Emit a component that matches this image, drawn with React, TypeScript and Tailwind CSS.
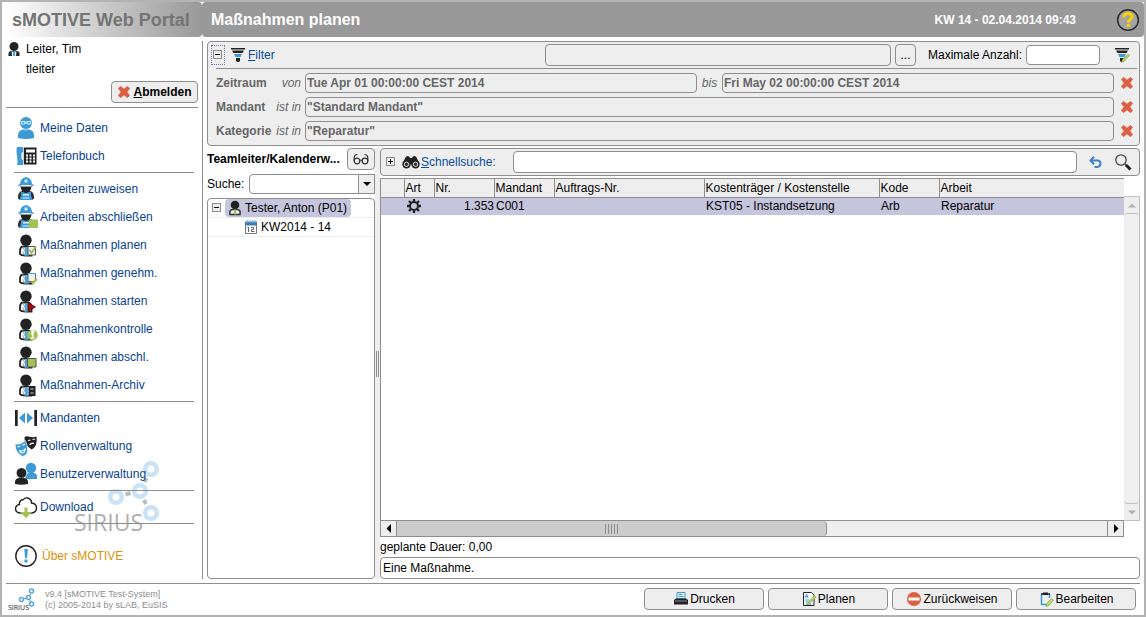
import type { ReactNode } from 'react';

type IconName =
  | 'user' | 'phone' | 'worker' | 'workerDone' | 'plan' | 'approve' | 'start'
  | 'control' | 'close' | 'archive' | 'clients' | 'roles' | 'users' | 'download' | 'about';

type NavItem = { label: string; icon: IconName };

const navGroups: NavItem[][] = [
  [
    { label: 'Meine Daten', icon: 'user' },
    { label: 'Telefonbuch', icon: 'phone' },
  ],
  [
    { label: 'Arbeiten zuweisen', icon: 'worker' },
    { label: 'Arbeiten abschließen', icon: 'workerDone' },
    { label: 'Maßnahmen planen', icon: 'plan' },
    { label: 'Maßnahmen genehm.', icon: 'approve' },
    { label: 'Maßnahmen starten', icon: 'start' },
    { label: 'Maßnahmenkontrolle', icon: 'control' },
    { label: 'Maßnahmen abschl.', icon: 'close' },
    { label: 'Maßnahmen-Archiv', icon: 'archive' },
  ],
  [
    { label: 'Mandanten', icon: 'clients' },
    { label: 'Rollenverwaltung', icon: 'roles' },
    { label: 'Benutzerverwaltung', icon: 'users' },
  ],
  [{ label: 'Download', icon: 'download' }],
];

export default function App() {
  return (
    <div className="flex h-screen flex-col border-2 border-[#b3b3b3] bg-white pl-1 font-['Liberation_Sans',Arial,sans-serif] text-xs text-black">
      <Header />
      <div className="flex min-h-0 flex-1 py-1">
        <Sidebar />
        <main className="flex min-w-0 flex-1 flex-col gap-0.5 px-1">
          <FilterPanel />
          <div className="flex min-h-0 flex-1">
            <TeamPane />
            <div className="flex w-[5px] shrink-0 items-center justify-center bg-[#eee]">
              <div className="h-[26px] w-[3px] border-x border-[#8e8e8e]" />
            </div>
            <ResultPane />
          </div>
        </main>
      </div>
      <Footer />
    </div>
  );
}

function Header() {
  return (
    <header className="flex h-[35px] shrink-0">
      <div className="flex w-[196px] items-center rounded-r-sm bg-linear-to-r from-white to-[#999] pl-1.5 text-lg font-bold whitespace-nowrap text-[#747474]">
        sMOTIVE Web Portal
      </div>
      <div className="flex flex-1 items-center rounded-sm bg-[#999] pl-[9px] font-bold text-white">
        <h1 className="flex-1 text-base">Maßnahmen planen</h1>
        <span className="mr-10">KW 14 - 02.04.2014 09:43</span>
        <button aria-label="Hilfe" className="mr-1">
          <svg viewBox="0 0 24 24" className="size-6">
            <circle cx="12" cy="12" r="10.300" fill="#a3a3a3" stroke="#2b2b2b" strokeWidth="1.500" />
            <path d="M7.800 9.500C7.800 4.300 16 4.300 16 8.800c0 2.800-3.700 2.700-3.700 5.700" fill="none" stroke="#f8d200" strokeWidth="3" />
            <rect x="10.800" y="16" width="3" height="3" fill="#f8d200" />
          </svg>
        </button>
      </div>
    </header>
  );
}

function Sidebar() {
  return (
    <aside className="relative flex w-[197px] shrink-0 flex-col border-r border-[#8e8e8e]">
      <Watermark />
      <div className="relative flex gap-1.5 pl-0.5 leading-4">
        <svg viewBox="0 0 12 16" className="h-4 w-3">
          <circle cx="6" cy="5.500" r="4.500" fill="#222" />
          <path d="M0.500 15v-2.500q0-2.500 3-2.500h5q3 0 3 2.500v2.500z" fill="#222" />
          <path d="M3.500 10.500h5l-.500 4.500h-4z" fill="#dff0fa" />
          <path d="M5 10.500h2v4.500h-2z" fill="#4aa8e0" />
        </svg>
        <div className="flex flex-col gap-1">
          <span>Leiter, Tim</span>
          <span>tleiter</span>
        </div>
      </div>
      <button className="relative mt-1 mr-1 flex h-[22px] w-[87px] items-center justify-center gap-0.5 self-end rounded-sm border border-[#8e8e8e] bg-[#eee] font-bold">
        <CrossIcon />
        <span><u>A</u>bmelden</span>
      </button>
      <hr className="mt-1 mr-1 border-[#8e8e8e]" />
      <nav className="relative mt-1.5 mr-2 ml-2">
        {navGroups.map((group) => (
          <div key={group[0].label} className="mb-0.5 border-b border-[#8e8e8e] pb-0.5">
            {group.map((item) => (
              <a key={item.label} href="#" className="flex h-7 items-center gap-0.5 whitespace-nowrap text-[#0a3f91]">
                <NavIcon name={item.icon} />
                {item.label}
              </a>
            ))}
          </div>
        ))}
        <a href="#" className="mt-[18px] flex h-7 items-center gap-1 text-[#dc9208]">
          <NavIcon name="about" />
          Über sMOTIVE
        </a>
      </nav>
    </aside>
  );
}

function Watermark() {
  return (
    <svg viewBox="0 0 90 84" className="absolute bottom-[35px] left-[66px] h-[84px] w-[90px]" aria-hidden="true">
      <g fill="none" stroke="#c9e2f5" strokeWidth="4.500">
        <circle cx="79" cy="9" r="5.800" />
        <circle cx="68" cy="31" r="5.800" />
        <circle cx="44" cy="37" r="5.800" />
        <circle cx="79" cy="53" r="5.800" />
      </g>
      <g stroke="#bdbdbd" strokeWidth="4">
        <path d="M72.500 22l2-4M53.500 34.500l5-1.500M72 40l2 4" />
      </g>
      <text x="2" y="71" fontSize="23" fill="#b0b0b0" fontFamily="Open Sans, sans-serif">SIRIUS</text>
    </svg>
  );
}

function Toggle({ open }: { open: boolean }) {
  return (
    <svg viewBox="0 0 10 10" className="size-2.5 shrink-0">
      <rect x="0.500" y="0.500" width="8" height="8" fill="#eee" stroke="#8e8e8e" />
      <path d={open ? 'M2 4.500h5' : 'M2 4.500h5M4.500 2v5'} stroke="#111" />
    </svg>
  );
}

function FilterPanel() {
  return (
    <section className="shrink-0 rounded-sm border border-[#8e8e8e] bg-[#eee]">
      <div className="flex h-[26px] items-center pl-[3px]">
        <div className="flex w-[334px] shrink-0 items-center">
          <button aria-label="Filter einklappen" className="flex h-5 w-3.5 items-center justify-center border border-dotted border-[#6f7f9f]">
            <Toggle open />
          </button>
          <FunnelIcon className="ml-[5px] size-4" />
          <a href="#" className="ml-0.5 text-[#0a4d9c]"><u>F</u>ilter</a>
        </div>
        <input aria-label="Filtername" readOnly className="h-[22px] min-w-0 flex-1 rounded-sm border border-[#8e8e8e] bg-[#eee]" />
        <button className="ml-1 h-[22px] w-[21px] rounded-sm border border-[#8e8e8e]">...</button>
        <label htmlFor="max" className="ml-3 w-[98px] whitespace-nowrap">Maximale Anzahl:</label>
        <input id="max" className="h-5 w-[74px] rounded-sm border border-[#8e8e8e] bg-white px-0.5" />
        <button aria-label="Filter bearbeiten" className="mr-[9px] ml-3.5">
          <FunnelIcon edit className="size-4" />
        </button>
      </div>
      <hr className="mr-0.5 ml-2 border-[#8e8e8e]" />
      <div className="flex flex-col gap-1 py-1 pr-[5px] pl-2">
        <FilterRow label="Zeitraum" op="von" value="Tue Apr 01 00:00:00 CEST 2014" until="Fri May 02 00:00:00 CEST 2014" />
        <FilterRow label="Mandant" op="ist in" value={'"Standard Mandant"'} />
        <FilterRow label="Kategorie" op="ist in" value={'"Reparatur"'} />
      </div>
    </section>
  );
}

function FilterRow({ label, op, value, until }: { label: string; op: string; value: string; until?: string }) {
  const box = 'h-5 min-w-0 flex-1 rounded-sm border border-[#8e8e8e] bg-[#eee] px-px font-bold text-[#666]';
  return (
    <div className="flex items-center text-[#666]">
      <label htmlFor={label} className="mr-1 flex w-[85px] justify-between whitespace-nowrap">
        <b>{label}</b>
        <i>{op}</i>
      </label>
      <input id={label} readOnly value={value} className={box} />
      {until && (
        <>
          <label htmlFor="until" className="w-[25px] text-center italic">bis</label>
          <input id="until" readOnly value={until} className={box} />
        </>
      )}
      <button aria-label={label + ' entfernen'} className="ml-1.5">
        <CrossIcon />
      </button>
    </div>
  );
}

function TeamPane() {
  return (
    <section className="flex w-[168px] shrink-0 flex-col">
      <div className="flex h-[22px] items-center justify-between">
        <b className="whitespace-nowrap">Teamleiter/Kalenderw...</b>
        <button aria-label="Ansicht" className="flex h-[22px] w-7 items-center justify-center rounded-sm border border-[#8e8e8e] bg-[#eee]">
          <svg viewBox="0 0 16 12" className="h-3 w-4" fill="none" stroke="#333" strokeWidth="1.200">
            <circle cx="4" cy="8" r="2.800" />
            <circle cx="12" cy="8" r="2.800" />
            <path d="M6.800 7.500q1.200-1 2.400 0M1.200 8V4.500Q1.500 1.500 4.500 1.500M14.800 8V4.500Q14.500 1.500 11.500 1.500" />
          </svg>
        </button>
      </div>
      <div className="mt-1 flex h-5 items-center">
        <label htmlFor="team" className="w-[42px]">Suche:</label>
        <input id="team" className="h-5 min-w-0 flex-1 rounded-l-sm border border-[#8e8e8e] px-0.5" />
        <button aria-label="Auswahl" className="flex h-5 w-4 items-center justify-center border border-l-0 border-[#8e8e8e] bg-[#eee]">
          <svg viewBox="0 0 8 4" className="h-1 w-2"><path d="M0 0h8L4 4z" /></svg>
        </button>
      </div>
      <ul className="mt-1 flex-1 rounded-sm border border-[#8e8e8e]">
        <li className="flex h-[19px] items-center border-b border-[#eee] pl-1">
          <Toggle open />
          <span className="ml-[3px] flex h-[18px] items-center gap-0.5 rounded-sm bg-[#c6c5de] pr-1 pl-0.5 whitespace-nowrap">
            <svg viewBox="0 0 16 18" className="h-[18px] w-4">
              <circle cx="8" cy="6" r="4.300" fill="#222" />
              <path d="M3 15.500q-1-5 3-5h4q4 0 3 5z" fill="#eee" stroke="#333" strokeWidth="1.500" />
              <path d="M7 10.500h2v5h-2z" fill="#a4c254" />
            </svg>
            Tester, Anton (P01)
          </span>
        </li>
        <li className="flex h-[19px] items-center gap-1 border-b border-[#eee] pl-[37px]">
          <svg viewBox="0 0 12 14" className="h-3.5 w-3">
            <path d="M0.500 2.500h11v11h-11z" fill="#fff" stroke="#777" />
            <path d="M0 1.500h12v4H0z" fill="#3a7fb8" />
            <path d="M2.500 0v3M5 0v3M7.500 0v3M10 0v3" stroke="#7ab0da" />
            <path d="M3.500 7v5M2.500 7.500h1M6 7.500h2.500v2H6.500v2H9.500" fill="none" stroke="#666" />
          </svg>
          KW2014 - 14
        </li>
      </ul>
    </section>
  );
}

const columns = [
  { label: '', width: 'w-[23px]' },
  { label: 'Art', width: 'w-[30px]' },
  { label: 'Nr.', width: 'w-[60px]' },
  { label: 'Mandant', width: 'w-[60px]' },
  { label: 'Auftrags-Nr.', width: 'w-[150px]' },
  { label: 'Kostenträger / Kostenstelle', width: 'w-[175px]' },
  { label: 'Kode', width: 'w-[60px]' },
  { label: 'Arbeit', width: '' },
];

function ResultPane() {
  return (
    <section className="flex min-w-0 flex-1 flex-col">
      <div className="flex h-7 shrink-0 items-center rounded-sm border border-[#8e8e8e] bg-[#eee] pr-[7px] pl-[5px]">
        <button aria-label="Suche ausklappen" className="flex"><Toggle open={false} /></button>
        <svg viewBox="0 0 18 14" className="ml-1.5 h-3.5 w-[18px]">
          <path d="M1 9Q3 1 5.500 1q2 0 2.500 2h2q.500-2 2.500-2Q15 1 17 9z" fill="#222" />
          <circle cx="4.500" cy="9.300" r="4.200" fill="#222" />
          <circle cx="13.500" cy="9.300" r="4.200" fill="#222" />
          <circle cx="4.500" cy="9.300" r="2.200" fill="#333" stroke="#ddd" />
          <circle cx="13.500" cy="9.300" r="2.200" fill="#333" stroke="#ddd" />
        </svg>
        <label htmlFor="quick" className="ml-px w-[92px] text-[#0a4d9c]"><u>S</u>chnellsuche:</label>
        <input id="quick" className="h-[22px] min-w-0 flex-1 rounded-sm border border-[#8e8e8e] bg-white px-0.5" />
        <button aria-label="Zurücksetzen" className="ml-3">
          <svg viewBox="0 0 13 13" className="size-[13px]" fill="none" stroke="#4484c4" strokeWidth="2">
            <path d="M5 0.800L1.500 4.500L5 8.200M1.500 4.500h7Q11.500 4.500 11.500 7.500T8.500 11H5.500" />
          </svg>
        </button>
        <button aria-label="Suchen" className="ml-3">
          <svg viewBox="0 0 18 18" className="size-[18px]">
            <circle cx="7" cy="7" r="5.200" fill="none" stroke="#444" strokeWidth="1.300" />
            <path d="M11 11l1.500 1.500" stroke="#444" strokeWidth="1.500" />
            <path d="M12 12l4.500 4.500" stroke="#222" strokeWidth="3" />
          </svg>
        </button>
      </div>

      <div className="mt-0.5 flex min-h-0 flex-1">
        <div className="flex min-w-0 flex-1 flex-col">
          <div className="min-h-0 flex-1 overflow-hidden border-t border-l border-[#8e8e8e]">
            <table className="w-full table-fixed border-collapse whitespace-nowrap">
              <thead>
                <tr className="h-[18px] border-b border-[#8e8e8e] bg-[#eee]">
                  {columns.map((c, i) => (
                    <th key={i} className={`${c.width} border-r border-[#8e8e8e] p-0 pl-px text-left font-normal last:border-r-0`}>{c.label}</th>
                  ))}
                </tr>
              </thead>
              <tbody>
                <tr className="h-[18px] bg-[#c6c5de]">
                  <td className="p-0" />
                  <td className="p-0 pl-[3px]"><GearIcon /></td>
                  <td className="p-0 text-right">1.353</td>
                  <td className="p-0 pl-0.5">C001</td>
                  <td className="p-0" />
                  <td className="p-0 pl-0.5">KST05 - Instandsetzung</td>
                  <td className="p-0 pl-0.5">Arb</td>
                  <td className="p-0 pl-0.5">Reparatur</td>
                </tr>
              </tbody>
            </table>
          </div>
          <div className="flex h-[17px] shrink-0 border border-[#8e8e8e] bg-[#eee]">
            <ScrollArrow label="Nach links" className="w-4 border-r border-[#8e8e8e]"><path d="M6 0L1.500 4.500L6 9z" /></ScrollArrow>
            <div className="flex w-[58%] items-center justify-center gap-0.5 rounded-r-sm border-r border-[#8e8e8e] bg-[#ccc]">
              {[0, 1, 2, 3, 4].map((n) => <span key={n} className="h-2.5 w-px bg-[#8e8e8e]" />)}
            </div>
            <div className="flex-1" />
            <ScrollArrow label="Nach rechts" className="w-4 border-l border-[#8e8e8e]"><path d="M2 0l4.500 4.500L2 9z" /></ScrollArrow>
          </div>
        </div>
        <div className="mt-[18px] mb-4 flex w-4 shrink-0 flex-col border border-l-0 border-[#c0c0c0] bg-[#eee]">
          <ScrollArrow label="Nach oben" className="h-4 text-[#b0b0b0]"><path d="M0 6.500L4 2.500L8 6.500z" /></ScrollArrow>
          <div className="flex-1 rounded-sm border-y border-[#c0c0c0] bg-[#f0f0f0]" />
          <ScrollArrow label="Nach unten" className="h-4 text-[#b0b0b0]"><path d="M0 2.500h8L4 6.500z" /></ScrollArrow>
        </div>
      </div>

      <label htmlFor="info" className="h-5 shrink-0 leading-5">geplante Dauer: 0,00</label>
      <input id="info" readOnly value="Eine Maßnahme." className="h-[22px] shrink-0 rounded-sm border border-[#8e8e8e] px-0.5" />
    </section>
  );
}

function ScrollArrow({ label, className, children }: { label: string; className: string; children: ReactNode }) {
  return (
    <button aria-label={label} className={`flex shrink-0 items-center justify-center ${className}`}>
      <svg viewBox="0 0 8 9" className="h-[9px] w-2" fill="currentColor">{children}</svg>
    </button>
  );
}

function Footer() {
  return (
    <footer className="mr-1 flex h-8 shrink-0 items-center border-t border-[#8e8e8e] pr-1">
      <svg viewBox="0 0 30 26" className="ml-px h-[26px] w-[30px]">
        <g fill="none" stroke="#5aa9dc" strokeWidth="1.600">
          <circle cx="24.500" cy="4" r="2" />
          <circle cx="21.500" cy="10.500" r="2" />
          <circle cx="14.500" cy="12.500" r="2" />
          <circle cx="24.500" cy="17" r="2" />
        </g>
        <path d="M23.500 6.500l-1 2M19 11.200l-2 .500M22.500 13l1 2" stroke="#888" />
        <text x="1" y="23" fontSize="7" fill="#222" fontFamily="Open Sans, sans-serif">SIRIUS</text>
      </svg>
      <div className="ml-2 flex-1 text-[9px] leading-[11px] text-[#8e8e8e]">
        <p>v9.4 [sMOTIVE Test-System]</p>
        <p>(c) 2005-2014 by sLAB, EuSIS</p>
      </div>
      <div className="flex gap-1 pb-0.5">
        <FooterButton label="Drucken">
          <path d="M4 1.500h8v6H4z" fill="#e9f4fb" stroke="#3d9ad6" />
          <path d="M5.500 3.500h4M5.500 5.500h5" stroke="#3d9ad6" />
          <path d="M3 7.500h10l2 1.500v4.500H1V9z" fill="#222" />
          <path d="M2 10h12" stroke="#aaa" strokeWidth=".800" />
        </FooterButton>
        <FooterButton label="Planen">
          <path d="M2.500 1.500h8l2.500 2.500v10.500h-10.500z" fill="#fff" stroke="#222" />
          <path d="M4 7l1.500-4L7 7M4.500 5.800h2M4.500 9h4M4.500 11h3M4.500 13h6" fill="none" stroke="#3d9ad6" />
          <path d="M13.500 4.500l1.500 1.500-6 6.500-2.500 1 1-2.500z" fill="#bad67c" stroke="#86a83e" strokeWidth=".700" />
        </FooterButton>
        <FooterButton label="Zurückweisen">
          <circle cx="8" cy="8" r="7" fill="#dc6043" />
          <path d="M2.500 6.500h11v3h-11z" fill="#fff" />
        </FooterButton>
        <FooterButton label="Bearbeiten">
          <path d="M3.500 3v10.500h6M11.500 3v4" fill="none" stroke="#3d9ad6" strokeWidth="1.500" />
          <path d="M3 3h9" stroke="#222" strokeWidth="1.500" />
          <path d="M5 1.500h5v2.500H5z" fill="#222" />
          <path d="M13.500 7.500l2 1.500-4.500 5.500-3 1 .800-3z" fill="#bad67c" stroke="#86a83e" strokeWidth=".700" />
        </FooterButton>
      </div>
    </footer>
  );
}

function FooterButton({ label, children }: { label: string; children: ReactNode }) {
  return (
    <button className="flex h-[22px] w-[120px] items-center justify-center gap-px rounded-sm border border-[#8e8e8e] bg-[#eee]">
      <svg viewBox="0 0 16 16" className="size-4">{children}</svg>
      {label}
    </button>
  );
}

function CrossIcon() {
  return (
    <svg viewBox="0 0 14 14" className="size-3.5">
      <path d="M3.500 1L7 3.800L10.500 1L13 3.500L10.200 7L13 10.500L10.500 13L7 10.200L3.500 13L1 10.500L3.800 7L1 3.500z" fill="#dc6043" />
    </svg>
  );
}

function FunnelIcon({ edit, className }: { edit?: boolean; className: string }) {
  return (
    <svg viewBox="0 0 16 16" className={className}>
      <path d="M1 1h14v1.500H1zM2 3.500h12l-1.500 2.500h-9z" fill="#222" />
      <path d="M4 7h8l-1.500 3h-5z" fill="#3d9ad6" />
      <path d="M6 11h4v3l-1 1H7l-1-1z" fill="#222" />
      {edit && <path d="M14 7l1.500 1.300-5.300 6-2.500 1 .700-2.500z" fill="#bad67c" stroke="#86a83e" strokeWidth=".700" />}
    </svg>
  );
}

function GearIcon() {
  return (
    <svg viewBox="0 0 14 14" className="size-3.5">
      <circle cx="7" cy="7" r="4" fill="none" stroke="#222" strokeWidth="2" />
      <path d="M7 0v3M7 11v3M0 7h3M11 7h3M2 2l2 2M10 10l2 2M12 2l-2 2M4 10l-2 2" stroke="#222" strokeWidth="2.300" />
    </svg>
  );
}

// Dark figure with a blue tie, shared by all "Maßnahmen" entries
function Manager({ children }: { children: ReactNode }) {
  return (
    <>
      <path d="M9 13.500Q6 14 6 18v3q1 1.500 6 1.500h5.500V18q0-3.500-3-4.500z" fill="#fff" stroke="#222" strokeWidth="1.800" />
      <path d="M9 13.500l1.500 4-1 2 1 3" fill="none" stroke="#999" />
      <path d="M11 14h3l.500 4v4.800H11z" fill="#4aa8e0" />
      <ellipse cx="12" cy="7.200" rx="5.700" ry="5.800" fill="#222" />
      {children}
    </>
  );
}

function Worker({ children }: { children?: ReactNode }) {
  return (
    <>
      <path d="M4 21.500q-.500-6 3.500-7.500h9q4 1.500 3.500 7.500l-2 1.500H6z" fill="#333" />
      <path d="M7 14.500l5 1.500 5-1.500v4l1.500 4.500h-13L7 18.500z" fill="#3d9ad6" />
      <path d="M9 17h6v1.500H9zM8.500 20.500h7v1h-7z" fill="#e6f3fb" />
      <path d="M6.500 9h11q-.500 6.500-5.500 6.500T6.500 9z" fill="#222" />
      <path d="M6 8Q6 1 12 0q6 1 6 8z" fill="#3d9ad6" />
      <path d="M10.500 2.500h3V5.500h-3z" fill="#d5ebf8" />
      <path d="M4.500 8.500Q12 5 19.500 8.500" fill="none" stroke="#3d9ad6" strokeWidth="1.500" />
      <path d="M7 9.200h10" stroke="#e6f3fb" strokeWidth=".800" />
      {children}
    </>
  );
}

const icons: Record<IconName, ReactNode> = {
  user: (
    <>
      <circle cx="12" cy="7" r="6" fill="#3d9ad6" />
      <path d="M4 22v-3q0-4.500 5-5.500h6q5 1 5 5.500v3q-8 1.800-16 0z" fill="#3d9ad6" />
      <path d="M8 13.300q4 1.500 8 0" fill="none" stroke="#9fd0ee" />
      <path d="M7.500 5.500h3.500v2.500H7.500zM13 5.500h3.500v2.500H13zM11 6.500h2" fill="none" stroke="#e6f3fb" />
    </>
  ),
  phone: (
    <>
      <path d="M3 3h6v5l-1.500 1v6l1.500 1v5H3q1-3 0-9t0-9z" fill="#3d9ad6" />
      <path d="M9.800 3.500h12.700v17H9.800z" fill="#222" />
      <path d="M12 5.500h9v3h-9zM12 10.500h2v2h-2zM15.500 10.500h2v2h-2zM19 10.500h2v2h-2zM12 13.500h2v2h-2zM15.500 13.500h2v2h-2zM19 13.500h2v2h-2zM12 16.500h2v2h-2zM15.500 16.500h2v2h-2zM19 16.500h2v2h-2z" fill="#fff" />
    </>
  ),
  worker: <Worker />,
  workerDone: <Worker><path d="M15 14.500h9V23h-9z" fill="#a4c254" /></Worker>,
  plan: (
    <Manager>
      <path d="M14 13.500h7.500V22H14z" fill="#eee" stroke="#555" />
      <path d="M15.500 17l2 3 4.500-6.500" fill="none" stroke="#8db83d" strokeWidth="1.500" />
    </Manager>
  ),
  approve: (
    <Manager>
      <path d="M14 12.500h7.500V20.500h-7.500z" fill="#eee" stroke="#666" />
      <path d="M14 12.500h8" stroke="#4aa8e0" />
      <path d="M17.500 20.500l1.500 2 4-4.500" fill="none" stroke="#a4c254" strokeWidth="2" />
    </Manager>
  ),
  start: <Manager><path d="M14 13.500l7.500 4.500L14 22.500z" fill="#a00d0d" stroke="#500" strokeWidth=".700" /></Manager>,
  control: (
    <Manager>
      <circle cx="18.500" cy="18" r="5.300" fill="#a4c254" />
      <path d="M17.200 17h1.600v4M16.800 21h3.600M18 14h1.600v1.500H18z" fill="none" stroke="#fff" strokeWidth="1.300" />
    </Manager>
  ),
  close: <Manager><path d="M13.500 13.500h8.500v8.500h-8.500z" fill="#a4c254" stroke="#555" /></Manager>,
  archive: (
    <Manager>
      <path d="M14.500 13h7v10h-7z" fill="#222" />
      <path d="M16.500 16h3M16.500 20h3M13.500 15h1.500M13.500 18h1.500M13.500 21h1.500" stroke="#ddd" />
    </Manager>
  ),
  clients: (
    <>
      <path d="M1 4h2.700v16H1zM20.300 4H23v16h-2.700z" fill="#222" />
      <path d="M11 6.500v11l-6-5.500zM13 6.500v11l6-5.500z" fill="#3d9ad6" />
    </>
  ),
  roles: (
    <>
      <path d="M10.500 3.500q1.500-2 4-1 4 1.500 8 0 1.500 10-5 13L11 10z" fill="#222" />
      <path d="M14 6.500l2.500-.500M18.500 5.500l2.500-.500M15.500 11q2-2.500 4.500-1.500" stroke="#fff" strokeWidth="1.200" fill="none" />
      <path d="M1 10q6 1 10.500-3.500Q17 20 9 22.500 1.500 20 1 10z" fill="#3d9ad6" stroke="#fff" strokeWidth=".600" />
      <path d="M3.500 13l2.500-.800M8.500 11.300l2.500-1.200M5.500 16.500q3.500 1.500 6-2-1 5-3.500 4.500T5.500 16.500" stroke="#fff" strokeWidth="1.100" fill="none" />
    </>
  ),
  users: (
    <>
      <circle cx="17" cy="6" r="5.200" fill="#3d9ad6" />
      <path d="M11.500 17v-2.500q0-3.500 4-3.500h4q3.500 0 3.500 3.500V17z" fill="#3d9ad6" />
      <circle cx="7.500" cy="11" r="5.300" fill="#222" stroke="#fff" strokeWidth=".700" />
      <path d="M1 22v-2q0-3.500 4-4h5q4 .500 4 4v2q-6.500 1.500-13 0z" fill="#222" />
    </>
  ),
  download: (
    <>
      <path d="M8 18H6Q1.500 17.500 1.500 13.500 2 10 5.500 9.500 5 5 9.500 4.500q1-2 4-1.500 4 1 4 5 5 .500 5 5t-5 5H16" fill="none" stroke="#222" strokeWidth="1.400" />
      <path d="M10.500 12.500h3v4.500H18l-6 6-6-6h4.500z" fill="#a4c254" />
    </>
  ),
  about: (
    <>
      <circle cx="12" cy="12" r="10.200" fill="#fff" stroke="#222" strokeWidth="1.400" />
      <path d="M10.300 5h3.600l-.800 9h-2zM10.500 15.500h3v3h-3z" fill="#3d9ad6" />
    </>
  ),
};

function NavIcon({ name }: { name: IconName }) {
  return <svg viewBox="0 0 24 24" className="size-6 shrink-0">{icons[name]}</svg>;
}
